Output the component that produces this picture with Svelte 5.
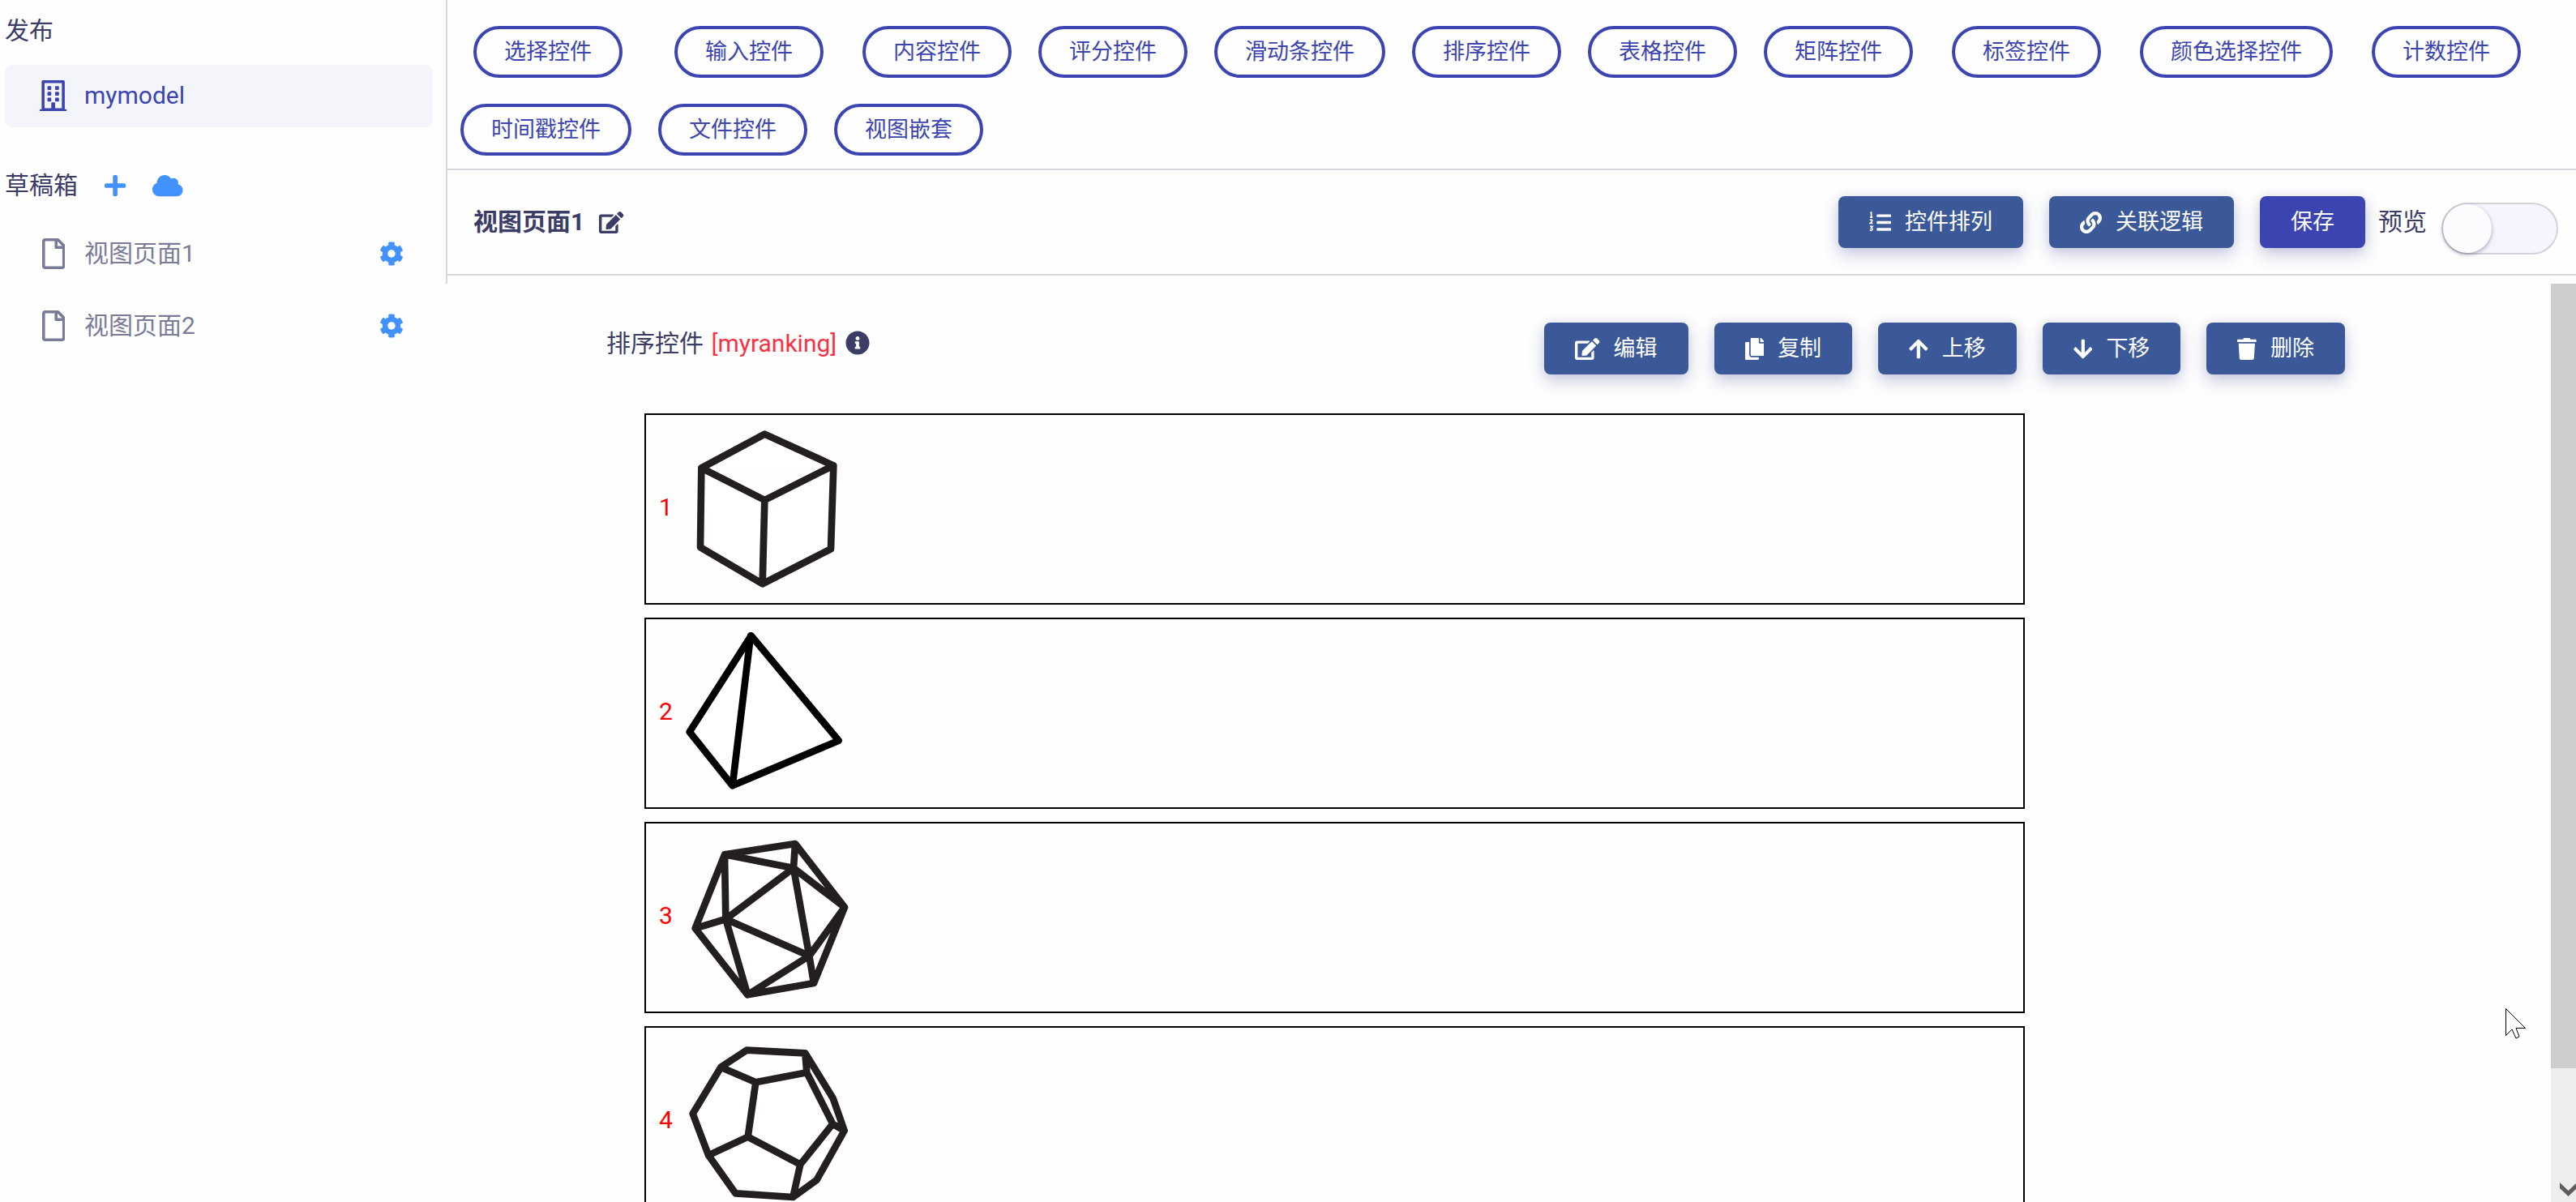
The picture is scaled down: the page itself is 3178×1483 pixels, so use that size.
<script>
  const icons = {
    plus: { w: 448, d: 'M416 208H272V64c0-17.67-14.33-32-32-32h-32c-17.67 0-32 14.33-32 32v144H32c-17.67 0-32 14.33-32 32v32c0 17.67 14.33 32 32 32h144v144c0 17.67 14.33 32 32 32h32c17.67 0 32-14.33 32-32V304h144c17.67 0 32-14.33 32-32v-32c0-17.67-14.33-32-32-32z' },
    cloud: { w: 640, d: 'M537.6 226.6c4.1-10.7 6.4-22.4 6.4-34.6 0-53-43-96-96-96-19.7 0-38.1 6-53.3 16.2C367 64.2 315.3 32 256 32c-88.4 0-160 71.6-160 160 0 2.7.1 5.4.2 8.1C40.2 219.8 0 273.2 0 336c0 79.5 64.5 144 144 144h368c70.7 0 128-57.3 128-128 0-61.9-44-113.6-102.4-125.4z' },
    cog: { w: 512, d: 'M487.4 315.7l-42.6-24.6c4.3-23.2 4.3-47 0-70.2l42.6-24.6c4.9-2.8 7.1-8.6 5.5-14-11.1-35.6-30-67.8-54.7-94.6-3.8-4.1-10-5.1-14.8-2.3L380.8 110c-17.9-15.4-38.5-27.3-60.8-35.1V25.8c0-5.6-3.9-10.5-9.4-11.7-36.7-8.2-74.3-7.8-109.2 0-5.5 1.2-9.4 6.1-9.4 11.7V75c-22.2 7.9-42.8 19.8-60.8 35.1L88.7 85.5c-4.9-2.8-11-1.9-14.8 2.3-24.7 26.7-43.6 58.9-54.7 94.6-1.7 5.4.6 11.2 5.5 14L67.3 221c-4.3 23.2-4.3 47 0 70.2l-42.6 24.6c-4.9 2.8-7.1 8.6-5.5 14 11.1 35.6 30 67.8 54.7 94.6 3.8 4.1 10 5.1 14.8 2.3l42.6-24.6c17.9 15.4 38.5 27.3 60.8 35.1v49.2c0 5.6 3.9 10.5 9.4 11.7 36.7 8.2 74.3 7.8 109.2 0 5.5-1.2 9.4-6.1 9.4-11.7v-49.2c22.2-7.9 42.8-19.8 60.8-35.1l42.6 24.6c4.9 2.8 11 1.9 14.8-2.3 24.7-26.7 43.6-58.9 54.7-94.6 1.5-5.5-.7-11.3-5.6-14.1zM256 336c-44.1 0-80-35.9-80-80s35.9-80 80-80 80 35.9 80 80-35.9 80-80 80z' },
    file: { w: 384, d: 'M369.9 97.9L286 14C277 5 264.8-.1 252.1-.1H48C21.5 0 0 21.5 0 48v416c0 26.5 21.5 48 48 48h288c26.5 0 48-21.5 48-48V131.9c0-12.7-5.1-25-14.1-34zM332.1 128H256V51.9l76.1 76.1zM48 464V48h160v104c0 13.3 10.7 24 24 24h104v288H48z' },
    building: { w: 448, d: 'M436 480h-20V24c0-13.255-10.745-24-24-24H56C42.745 0 32 10.745 32 24v456H12c-6.627 0-12 5.373-12 12v20h448v-20c0-6.627-5.373-12-12-12zM80 48h288v416H256v-84c0-6.6-5.4-12-12-12h-40c-6.6 0-12 5.4-12 12v84H80zM140 96h40q12 0 12 12v40q0 12-12 12h-40q-12 0-12-12v-40q0-12 12-12zM268 96h40q12 0 12 12v40q0 12-12 12h-40q-12 0-12-12v-40q0-12 12-12zM140 192h40q12 0 12 12v40q0 12-12 12h-40q-12 0-12-12v-40q0-12 12-12zM268 192h40q12 0 12 12v40q0 12-12 12h-40q-12 0-12-12v-40q0-12 12-12zM140 288h40q12 0 12 12v40q0 12-12 12h-40q-12 0-12-12v-40q0-12 12-12zM268 288h40q12 0 12 12v40q0 12-12 12h-40q-12 0-12-12v-40q0-12 12-12z' },
    edit: { w: 576, d: 'M402.6 83.2l90.2 90.2c3.8 3.8 3.8 10 0 13.8L274.4 405.6l-92.8 10.3c-12.4 1.4-22.9-9.1-21.5-21.5l10.3-92.8L388.8 83.2c3.8-3.8 10-3.8 13.8 0zm162-22.9l-48.8-48.8c-15.2-15.2-39.9-15.2-55.2 0l-35.4 35.4c-3.8 3.8-3.8 10 0 13.8l90.2 90.2c3.8 3.8 10 3.8 13.8 0l35.4-35.4c15.2-15.3 15.2-40 0-55.2zM384 346.2V448H64V128h229.8c3.2 0 6.2-1.3 8.5-3.5l40-40c7.6-7.6 2.2-20.5-8.5-20.5H48C21.5 64 0 85.5 0 112v352c0 26.5 21.5 48 48 48h352c26.5 0 48-21.5 48-48V306.2c0-10.7-12.9-16-20.5-8.5l-40 40c-2.2 2.3-3.5 5.3-3.5 8.5z' },
    copy: { w: 448, d: 'M320 448v40c0 13.255-10.745 24-24 24H24c-13.255 0-24-10.745-24-24V120c0-13.255 10.745-24 24-24h72v296c0 30.879 25.121 56 56 56h168zm0-344V0H152c-13.255 0-24 10.745-24 24v368c0 13.255 10.745 24 24 24h272c13.255 0 24-10.745 24-24V128H344c-13.2 0-24-10.8-24-24zm120.971-31.029L375.029 7.029A24 24 0 0 0 358.059 0H352v96h96v-6.059a24 24 0 0 0-7.029-16.97z' },
    up: { w: 448, d: 'M34.9 289.5l-22.2-22.2c-9.4-9.4-9.4-24.6 0-33.9L207 39c9.4-9.4 24.6-9.4 33.9 0l194.3 194.3c9.4 9.4 9.4 24.6 0 33.9L413 289.4c-9.5 9.5-25 9.3-34.3-.4L264 168.6V456c0 13.3-10.7 24-24 24h-32c-13.3 0-24-10.7-24-24V168.6L69.2 289.1c-9.3 9.8-24.8 10-34.3.4z' },
    down: { w: 448, d: 'M413.1 222.5l22.2 22.2c9.4 9.4 9.4 24.6 0 33.9L241 473c-9.4 9.4-24.6 9.4-33.9 0L12.7 278.6c-9.4-9.4-9.4-24.6 0-33.9l22.2-22.2c9.5-9.5 25-9.3 34.3.4L184 343.4V56c0-13.3 10.7-24 24-24h32c13.3 0 24 10.7 24 24v287.4l114.8-120.5c9.3-9.8 24.8-10 34.3-.4z' },
    trash: { w: 448, d: 'M432 32H312l-9.4-18.7A24 24 0 0 0 281.1 0H166.8a23.72 23.72 0 0 0-21.4 13.3L136 32H16A16 16 0 0 0 0 48v32a16 16 0 0 0 16 16h416a16 16 0 0 0 16-16V48a16 16 0 0 0-16-16zM53.2 467a48 48 0 0 0 47.9 45h245.8a48 48 0 0 0 47.9-45L416 128H32z' },
    info: { w: 512, d: 'M256 8C119.043 8 8 119.083 8 256c0 136.997 111.043 248 248 248s248-111.003 248-248C504 119.083 392.957 8 256 8zm0 110c23.196 0 42 18.804 42 42s-18.804 42-42 42-42-18.804-42-42 18.804-42 42-42zm56 254c0 6.627-5.373 12-12 12h-88c-6.627 0-12-5.373-12-12v-24c0-6.627 5.373-12 12-12h12v-64h-12c-6.627 0-12-5.373-12-12v-24c0-6.627 5.373-12 12-12h64c6.627 0 12 5.373 12 12v100h12c6.627 0 12 5.373 12 12v24z' },
    link: { w: 512, d: 'M326.612 185.391c59.747 59.809 58.927 155.698.36 214.59-.11.12-.24.25-.36.37l-67.2 67.2c-59.27 59.27-155.699 59.262-214.96 0-59.27-59.26-59.27-155.7 0-214.96l37.106-37.106c9.84-9.84 26.786-3.3 27.294 10.606.648 17.722 3.826 35.527 9.69 52.721 1.986 5.822.567 12.262-3.783 16.612l-13.087 13.087c-28.026 28.026-28.905 73.66-1.155 101.96 28.024 28.579 74.086 28.749 102.325.51l67.2-67.19c28.191-28.191 28.073-73.757 0-101.83-3.701-3.694-7.429-6.564-10.341-8.569a16.037 16.037 0 0 1-6.947-12.606c-.396-10.567 3.348-21.456 11.698-29.806l21.054-21.055c5.521-5.521 14.182-6.199 20.584-1.731a152.482 152.482 0 0 1 20.522 17.197zM467.547 44.449c-59.261-59.262-155.69-59.27-214.96 0l-67.2 67.2c-.12.12-.25.25-.36.37-58.566 58.892-59.387 154.781.36 214.59a152.454 152.454 0 0 0 20.521 17.196c6.402 4.468 15.064 3.789 20.584-1.731l21.054-21.055c8.35-8.35 12.094-19.239 11.698-29.806a16.037 16.037 0 0 0-6.947-12.606c-2.912-2.005-6.64-4.875-10.341-8.569-28.073-28.073-28.191-73.639 0-101.83l67.2-67.19c28.239-28.239 74.3-28.069 102.325.51 27.75 28.3 26.872 73.934-1.155 101.96l-13.087 13.087c-4.35 4.35-5.769 10.79-3.783 16.612 5.864 17.194 9.042 34.999 9.69 52.721.509 13.906 17.454 20.446 27.294 10.606l37.106-37.106c59.271-59.259 59.271-155.699.001-214.959z' },
    list: { w: 512, d: 'M192 64h304q16 0 16 16v32q0 16-16 16H192q-16 0-16-16V80q0-16 16-16zM192 224h304q16 0 16 16v32q0 16-16 16H192q-16 0-16-16v-32q0-16 16-16zM192 384h304q16 0 16 16v32q0 16-16 16H192q-16 0-16-16v-32q0-16 16-16z', s: 'M22 34L50 22V134M18 136H82M18 204Q48 180 68 200Q82 222 24 274H82M18 346H76L44 388Q82 392 72 424Q56 452 16 434' }
  };

  const widgets = [
    ['选择控件', 'first'],
    ['输入控件', 'spaced'],
    ['内容控件', 'spaced'],
    ['评分控件', ''],
    ['滑动条控件', ''],
    ['排序控件', ''],
    ['表格控件', ''],
    ['矩阵控件', ''],
    ['标签控件', 'spaced'],
    ['颜色选择控件', 'spaced'],
    ['计数控件', 'spaced'],
    ['时间戳控件', ''],
    ['文件控件', ''],
    ['视图嵌套', '']
  ];

  const pages = ['视图页面1', '视图页面2'];

  const actions = [
    ['edit', '编辑'],
    ['copy', '复制'],
    ['up', '上移'],
    ['down', '下移'],
    ['trash', '删除']
  ];

  const solids = [
    { name: '立方体', ink: 'soft', box: '354 444 648 600', d: 'M670 467L925 583L915 892L662 1021L432 886L436 592ZM436 592L670 711L925 583M670 711L662 1021' },
    { name: '四面体', ink: 'hard', box: '174 90 648 600', d: 'M440 103L212 459L371 658L764 491ZM438 103L371 658' },
    { name: '二十面体', ink: 'soft', box: '174 96 648 600', d: 'M342 163L603 123L786 358L672 639L427 682L233 436ZM342 163L597 213L603 123M597 213L786 358M597 213L346 402L342 163M346 402L233 436M346 402L427 682M346 402L655 538L597 213M655 538L786 358M655 538L672 639M655 538L427 682' },
    { name: '十二面体', ink: 'soft', box: '174 132 648 600', d: 'M424 167L640 178L743 345L785 465L683 647L595 711L382 697L282 556L224 402L328 230ZM328 230L457 286L646 250L640 178M646 250L742 440L785 465M742 440L622 590L595 711M622 590L428 488L457 286M428 488L282 556' }
  ];

  let preview = $state(false);
</script>

{#snippet icon(name, cls)}
  <svg class="icon {cls}" viewBox="0 0 {icons[name].w} 512" aria-hidden="true">
    <path fill="currentColor" fill-rule="evenodd" d={icons[name].d} />
    {#if icons[name].s}
      <path class="numerals" d={icons[name].s} />
    {/if}
  </svg>
{/snippet}

<div class="app">
  <aside class="sidebar">
    <h2 class="heading">发布</h2>
    <a class="entry active" href="#mymodel">
      <span class="lead">{@render icon('building', 's38')}</span>
      <span class="label">mymodel</span>
    </a>
    <div class="heading drafts">
      <h2>草稿箱</h2>
      <button class="bare" aria-label="新建">{@render icon('plus', 's30')}</button>
      <button class="bare" aria-label="云端">{@render icon('cloud', 's30')}</button>
    </div>
    <nav>
      {#each pages as page}
        <div class="entry">
          <span class="lead">{@render icon('file', 's38')}</span>
          <a class="label" href="#page">{page}</a>
          <button class="bare" aria-label="设置 {page}">{@render icon('cog', 's30')}</button>
        </div>
      {/each}
    </nav>
  </aside>

  <main>
    <header>
      <div class="palette">
        {#each widgets as [label, kind]}
          <button class="pill {kind}">{label}</button>
        {/each}
      </div>
      <div class="toolbar">
        <h1>视图页面1</h1>
        <button class="bare rename" aria-label="重命名">{@render icon('edit', 's27')}</button>
        <div class="tools">
          <button class="btn">{@render icon('list', 's27')}控件排列</button>
          <button class="btn">{@render icon('link', 's27')}关联逻辑</button>
          <button class="btn primary">保存</button>
        </div>
        <label class="preview">
          预览
          <input type="checkbox" role="switch" bind:checked={preview} />
        </label>
      </div>
    </header>

    <div class="stage">
      <section class="question">
        <div class="question-head">
          <p>排序控件 <span class="key">[myranking]</span></p>
          {@render icon('info', 's30')}
          <div class="tools">
            {#each actions as [glyph, label]}
              <button class="btn">{@render icon(glyph, 's27')}{label}</button>
            {/each}
          </div>
        </div>
        <ol>
          {#each solids as solid, i}
            <li>
              <span class="rank">{i + 1}</span>
              <svg class="solid {solid.ink}" viewBox={solid.box} role="img" aria-label={solid.name}>
                <path d={solid.d} />
              </svg>
            </li>
          {/each}
        </ol>
      </section>
      <div class="scrollbar" aria-hidden="true">
        <div class="thumb"></div>
        <svg class="chevron" viewBox="0 0 20 17"><path d="M0 0L10.500 10L20 1V8L10.500 17L0 7Z" /></svg>
      </div>
    </div>
  </main>

  <svg class="cursor" viewBox="0 0 26 39" aria-hidden="true">
    <path d="M.5 .5V33.500L8 26L13 37L17 35L13 24.500H24.500Z" />
  </svg>
</div>

<style>
  :global(body) {
    background: #fefefe;
  }

  .app {
    position: relative;
    display: flex;
    height: 100vh;
    overflow: hidden;
    color: #3c3d66;
    font-family: Roboto, 'Noto Sans CJK SC', sans-serif;
    font-size: 30px;
    line-height: 44px;
  }

  h1,
  h2,
  p,
  ol {
    margin: 0;
    padding: 0;
    font-size: 30px;
    font-weight: 400;
  }

  a {
    color: inherit;
    text-decoration: none;
  }

  button {
    font: inherit;
    cursor: pointer;
  }

  .icon {
    display: block;
    flex: none;
    width: auto;
  }

  .s38 {
    height: 38px;
  }

  .s30 {
    height: 30px;
  }

  .s27 {
    height: 27px;
  }

  .numerals {
    fill: none;
    stroke: currentColor;
    stroke-width: 32;
  }

  .bare {
    padding: 0;
    border: 0;
    background: none;
    color: #4191ff;
  }

  .sidebar {
    box-sizing: border-box;
    flex: none;
    width: 550px;
    padding: 16px 16px 0 6px;
  }

  .heading {
    margin-bottom: 20px;
  }

  .drafts {
    display: flex;
    align-items: center;
    gap: 33px;
    margin: 50px 0 24px;
  }

  .entry {
    display: flex;
    align-items: center;
    height: 75px;
    margin-bottom: 12px;
    padding: 0 36px 2px 42px;
    border-radius: 9px;
    color: #7a7b97;
  }

  .entry.active {
    margin: 0;
    background: #f4f5fb;
    color: #3c44b1;
  }

  .lead {
    display: flex;
    justify-content: center;
    width: 36px;
    margin-right: 20px;
  }

  .label {
    flex: 1;
  }

  main {
    display: flex;
    flex: 1;
    flex-direction: column;
    min-width: 0;
  }

  header {
    padding-bottom: 10px;
    border-left: 2px solid #d7d7de;
  }

  .palette {
    display: flex;
    flex-wrap: wrap;
    gap: 32px 33px;
    padding: 32px 16px 16px;
    border-bottom: 2px solid #d7d7de;
  }

  .pill {
    height: 64px;
    padding: 0 34px;
    border: 4px solid #3c44b1;
    border-radius: 32px;
    background: transparent;
    color: #3c44b1;
    font-size: 27px;
    line-height: 40px;
    white-space: nowrap;
  }

  .first {
    margin: 0 16px;
  }

  .spaced {
    margin-left: 15px;
  }

  .toolbar {
    display: flex;
    align-items: center;
    height: 128px;
    padding: 0 22px 0 32px;
    border-bottom: 2px solid #d7d7de;
  }

  h1 {
    font-weight: 700;
  }

  .rename {
    margin-left: 18px;
    color: #3c3d66;
  }

  .tools {
    display: flex;
    gap: 32px;
    margin-left: auto;
  }

  .btn {
    display: flex;
    align-items: center;
    gap: 17px;
    height: 64px;
    padding: 0 38px;
    border: 0;
    border-radius: 8px;
    background: #3b5998;
    box-shadow: 0 0 12px rgba(60, 68, 120, 0.08), 0 8px 20px rgba(60, 68, 150, 0.28);
    color: #fff;
    font-size: 27px;
    line-height: 40px;
    white-space: nowrap;
  }

  .primary {
    background: #3c44b1;
  }

  .preview {
    display: flex;
    align-items: center;
    gap: 18px;
    margin-left: 16px;
  }

  input {
    box-sizing: border-box;
    width: 144px;
    height: 64px;
    margin: 16px 0 0;
    border: 2px solid #d1d2db;
    border-radius: 32px;
    background: #f4f5fd;
    appearance: none;
  }

  input::before {
    display: block;
    width: 60px;
    height: 60px;
    border-radius: 50%;
    background: #fcfcff;
    box-shadow: 0 2px 5px rgba(20, 20, 60, 0.35);
    content: '';
  }

  input:checked::before {
    margin-left: auto;
  }

  .stage {
    display: flex;
    flex: 1;
    min-height: 0;
  }

  .question {
    flex: 1;
    overflow: hidden;
    padding: 48px 254px 0 198px;
  }

  .question-head {
    display: flex;
    align-items: flex-start;
  }

  .question-head p {
    margin: 4px 11px 0 0;
  }

  .question-head > :global(.icon) {
    margin-top: 10px;
  }

  .key {
    margin-left: 2px;
    color: #f83245;
  }

  ol {
    display: flex;
    flex-direction: column;
    gap: 16px;
    margin: 48px 395px 0 47px;
    list-style: none;
  }

  li {
    display: flex;
    align-items: center;
    gap: 8px;
    height: 232px;
    padding: 0 16px;
    border: 2px solid #000;
  }

  .rank {
    padding-bottom: 4px;
    color: #f00;
  }

  .solid {
    width: 216px;
    height: 200px;
    overflow: visible;
  }

  .solid path {
    fill: #fff;
    stroke: #231f20;
    stroke-width: 26;
    stroke-linejoin: round;
    stroke-linecap: round;
  }

  .solid.hard path {
    stroke: #000;
  }

  .scrollbar {
    display: flex;
    flex: none;
    flex-direction: column;
    justify-content: space-between;
    width: 31px;
    background: #eeeef0;
  }

  .thumb {
    height: 85.4%;
    background: #cdcdcd;
  }

  .chevron {
    align-self: flex-end;
    width: 20px;
    height: 17px;
    margin-bottom: 7px;
    fill: #605b60;
  }

  .cursor {
    position: absolute;
    top: 1244px;
    left: 3091px;
    width: 26px;
    height: 39px;
    fill: #fff;
    stroke: #000;
    stroke-width: 1;
  }
</style>
